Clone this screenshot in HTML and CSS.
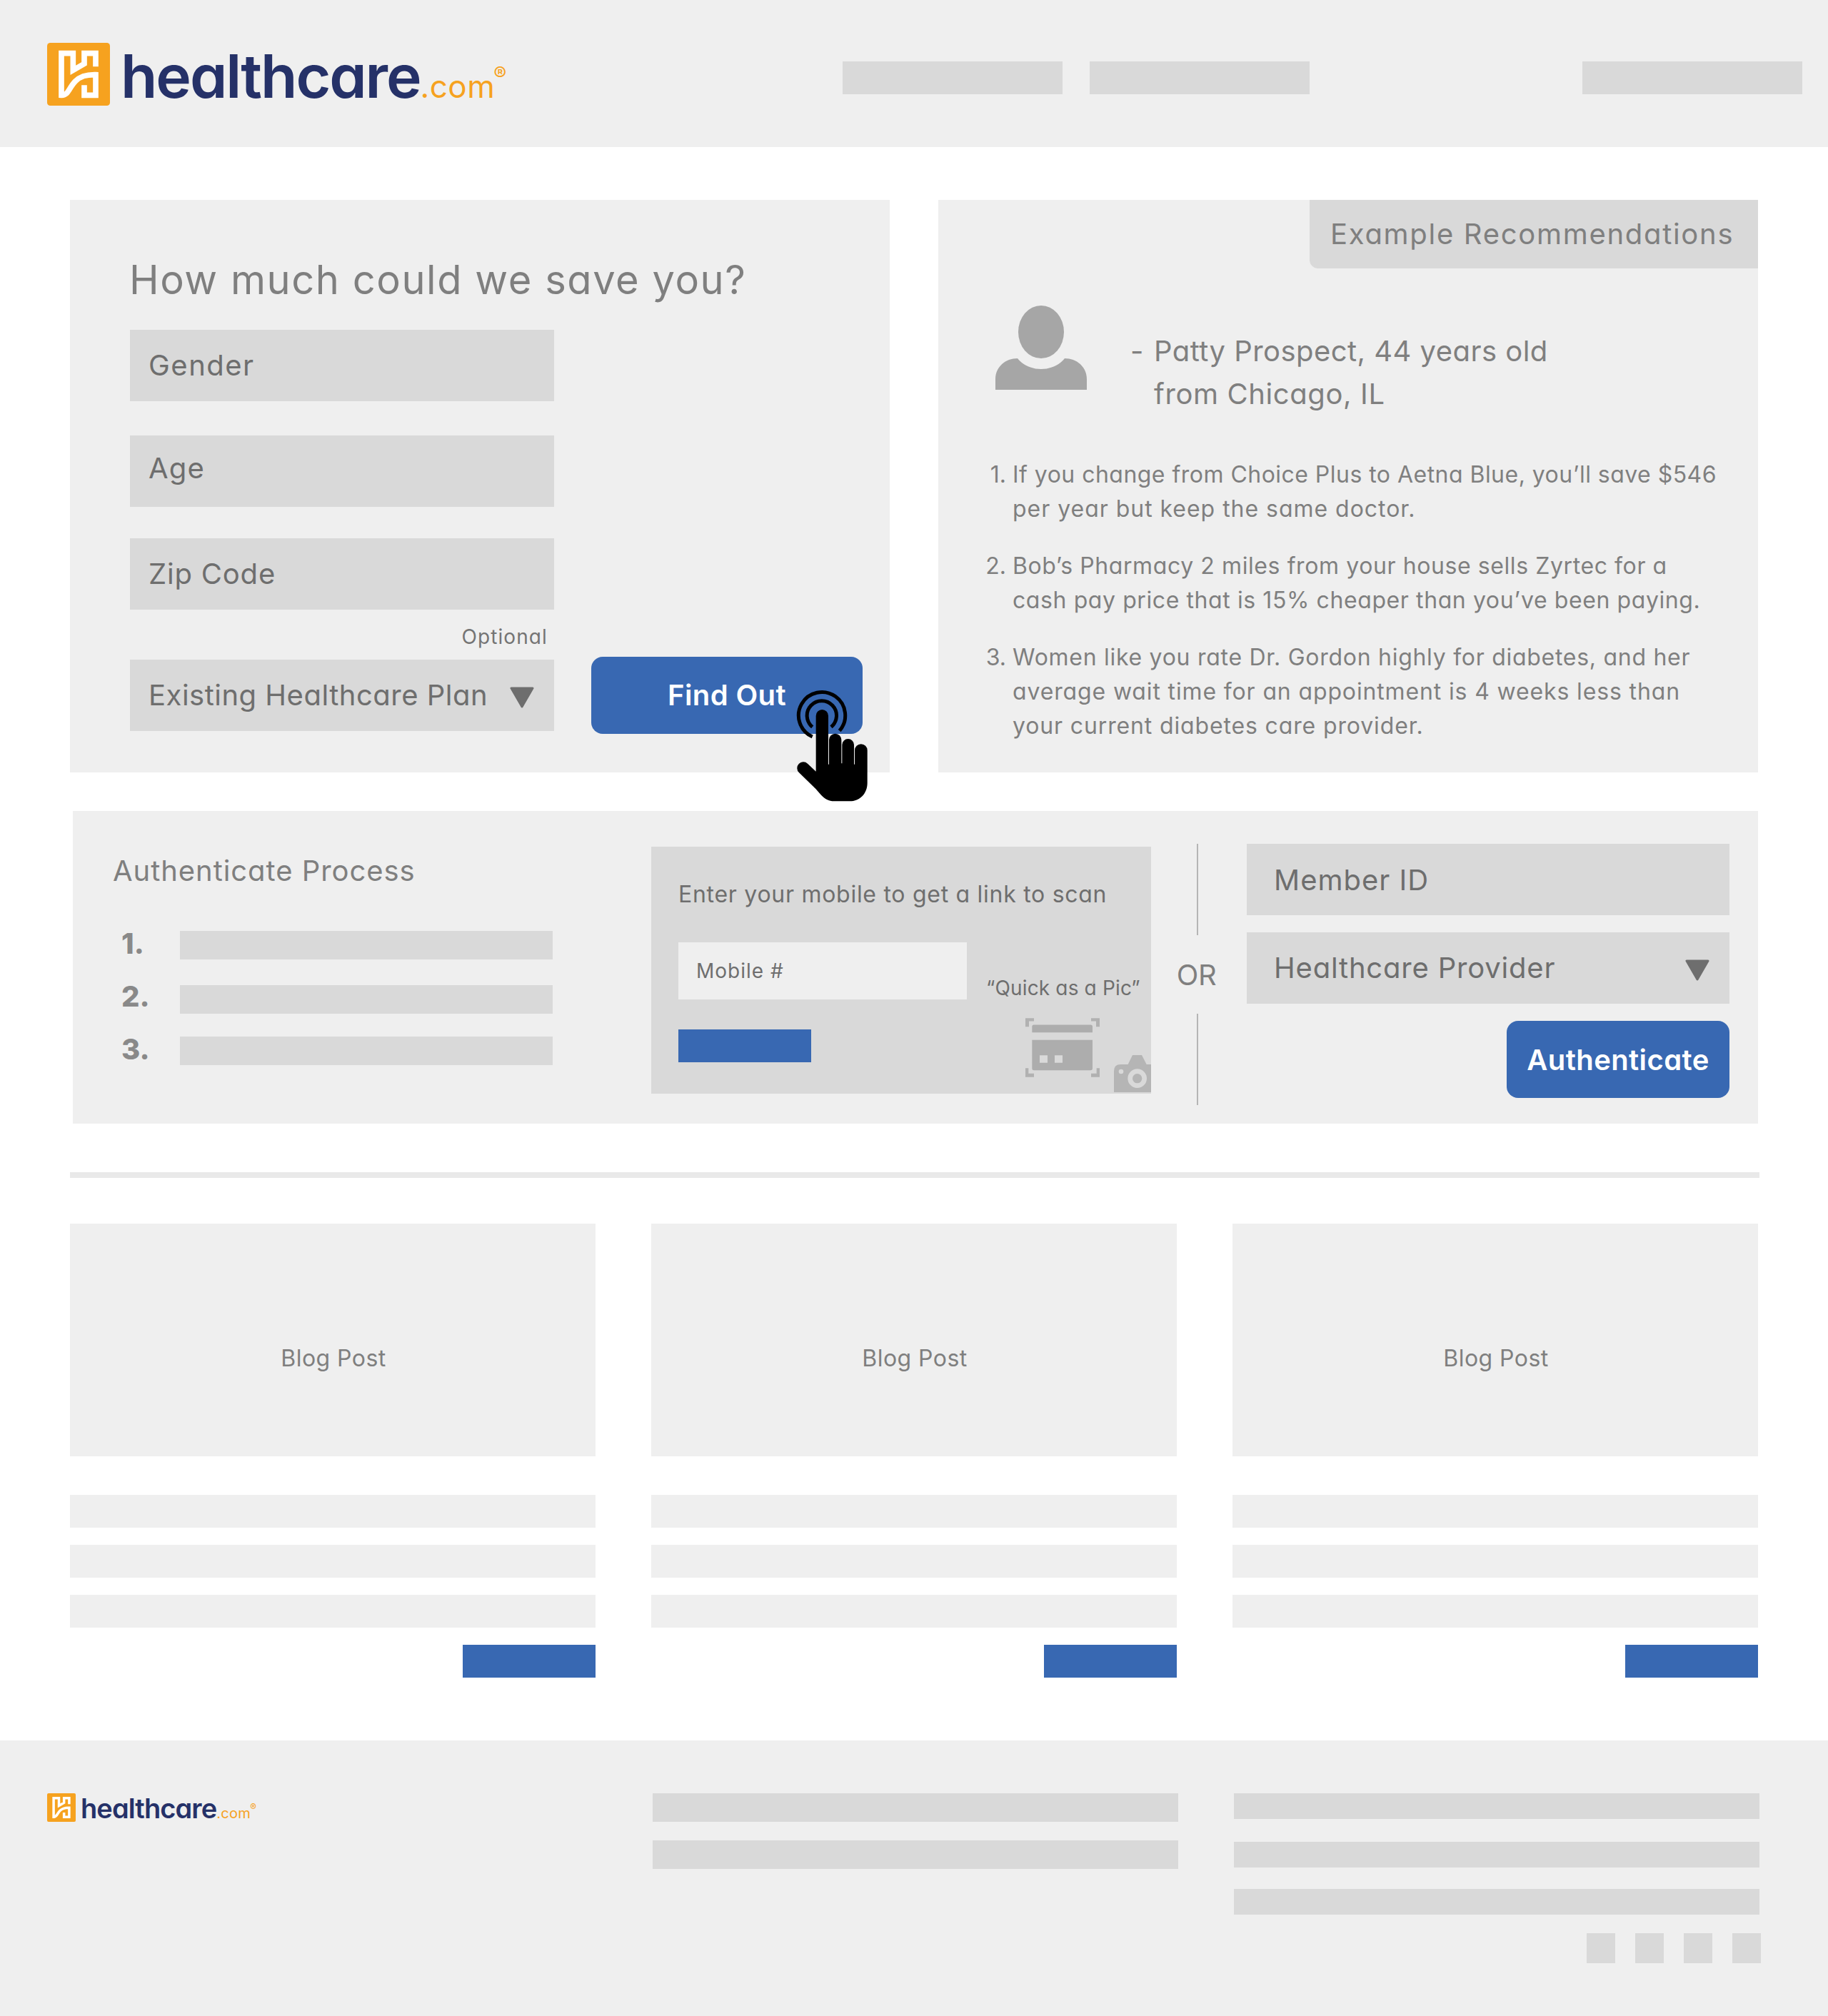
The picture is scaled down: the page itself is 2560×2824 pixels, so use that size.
FILE: index.html
```html
<!DOCTYPE html>
<html lang="en">
<head>
<meta charset="utf-8">
<title>healthcare.com</title>
<link rel="stylesheet" href="styles.css">
</head>
<body>
<svg class="defs" width="0" height="0" aria-hidden="true">
  <symbol id="mark" viewBox="0 0 264 264">
    <rect width="264" height="264" rx="13" fill="#f6a21f"/>
    <path d="M204 100V44H156V88L109 115V44H60V220C90 221 92 188 118 162C140 140 165 133 204 134V220H156V178" fill="none" stroke="#fff" stroke-width="23"/>
  </symbol>
  <symbol id="caret" viewBox="0 0 34 30">
    <path d="M2 2H32L17 28Z" fill="#6e6e6e" stroke="#6e6e6e" stroke-width="3" stroke-linejoin="round"/>
  </symbol>
</svg>

<header class="header">
  <div class="logo">
    <svg class="logo-mark"><use href="#mark"/></svg>
    <div class="logo-text">healthcare<span class="logo-tld">.com</span><span class="logo-reg">®</span></div>
  </div>
  <nav class="nav">
    <span class="nav-item"></span>
    <span class="nav-item"></span>
    <span class="nav-item nav-last"></span>
  </nav>
</header>

<main class="main">
  <div class="hero">
    <section class="panel form">
      <h1 class="form-title">How much could we save you?</h1>
      <div class="field gender">Gender</div>
      <div class="field age">Age</div>
      <div class="field zip">Zip Code</div>
      <div class="optional">Optional</div>
      <div class="form-row">
        <div class="field select plan"><span>Existing Healthcare Plan</span><svg class="caret"><use href="#caret"/></svg></div>
        <div class="button find">Find Out</div>
      </div>
      <svg class="pointer" viewBox="0 0 540 750">
        <g fill="none" stroke="#000" stroke-width="15">
          <path d="M143 396A98 98 0 1 1 257 371"/>
          <path d="M143 355A62 62 0 1 1 222 355"/>
        </g>
        <path d="M158 542V308A26 26 0 0 1 210 308V512H213V409A26 26 0 0 1 265 409V508H268V430A25 25 0 0 1 318 430V512H321V453A26.500 26.500 0 0 1 374 453V590C374 635 342 667 300 667H235C212 667 194 656 180 641L157 615L87 547A26 26 0 0 1 123 509Z"/>
      </svg>
    </section>

    <section class="panel recs">
      <div class="tab">Example Recommendations</div>
      <div class="profile">
        <svg class="avatar" viewBox="0 0 128 118">
          <ellipse cx="64" cy="37" rx="32" ry="37" fill="#a6a6a6"/>
          <path d="M0 118V103C0 86 14 74 31 74C38 83 50 89 64 89S90 83 97 74C114 74 128 86 128 103V118Z" fill="#a6a6a6"/>
        </svg>
        <span class="dash">-</span>
        <div class="who"><div class="who-name">Patty Prospect, 44 years old</div><div class="who-city">from Chicago, IL</div></div>
      </div>
      <div class="rec"><span class="num">1.</span><div><div class="t1">If you change from Choice Plus to Aetna Blue, you’ll save $546</div><div class="t2">per year but keep the same doctor.</div></div></div>
      <div class="rec"><span class="num">2.</span><div><div class="t3">Bob’s Pharmacy 2 miles from your house sells Zyrtec for a</div><div class="t3">cash pay price that is 15% cheaper than you’ve been paying.</div></div></div>
      <div class="rec"><span class="num">3.</span><div><div class="t4">Women like you rate Dr. Gordon highly for diabetes, and her</div><div class="t5">average wait time for an appointment is 4 weeks less than</div><div class="t5">your current diabetes care provider.</div></div></div>
    </section>
  </div>

  <section class="panel auth">
    <div class="process">
      <h2 class="process-title">Authenticate Process</h2>
      <div class="step"><b>1.</b><span></span></div>
      <div class="step second"><b>2.</b><span></span></div>
      <div class="step"><b>3.</b><span></span></div>
    </div>
    <div class="scan">
      <div class="scan-title">Enter your mobile to get a link to scan</div>
      <div class="scan-body">
        <div class="scan-left">
          <div class="mobile">Mobile #</div>
          <div class="pill"></div>
        </div>
        <div class="scan-right">
          <div class="quick">“Quick as a Pic”</div>
          <div class="scan-icons">
            <svg class="card-icon" viewBox="0 0 312 248">
              <path d="M0 36V0H36V13H15V36ZM276 0H312V36H297V13H276ZM0 210H13V233H36V248H0ZM299 210H312V248H276V233H299Z" fill="#b1b1b1"/>
              <path d="M28 60V36Q28 28 36 28H274Q282 28 282 36V60ZM28 92H282V211Q282 219 274 219H36Q28 219 28 211ZM60 156V188H93V156ZM123 156V188H156V156Z" fill="#adadad" fill-rule="evenodd"/>
            </svg>
            <svg class="camera-icon" viewBox="0 0 156 156">
              <path d="M0 156V67Q0 39 28 39H59L78 0H117L137 39H156V156Z" fill="#b5b5b5"/>
              <circle cx="30" cy="69" r="10" fill="#d9d9d9"/>
              <circle cx="98" cy="98" r="30" fill="none" stroke="#d9d9d9" stroke-width="20"/>
            </svg>
          </div>
        </div>
      </div>
    </div>
    <div class="or"><i></i><span>OR</span><i></i></div>
    <div class="member">
      <div class="field member-id">Member ID</div>
      <div class="field select provider"><span>Healthcare Provider</span><svg class="caret"><use href="#caret"/></svg></div>
      <div class="button authenticate">Authenticate</div>
    </div>
  </section>

  <div class="rule"></div>

  <div class="posts">
    <article class="post"><div class="thumb">Blog Post</div><span class="line"></span><span class="line"></span><span class="line"></span><span class="pill"></span></article>
    <article class="post"><div class="thumb">Blog Post</div><span class="line"></span><span class="line"></span><span class="line"></span><span class="pill"></span></article>
    <article class="post"><div class="thumb">Blog Post</div><span class="line"></span><span class="line"></span><span class="line"></span><span class="pill"></span></article>
  </div>
</main>

<footer class="footer">
  <div class="logo small">
    <svg class="logo-mark"><use href="#mark"/></svg>
    <div class="logo-text">healthcare<span class="logo-tld">.com</span><span class="logo-reg">®</span></div>
  </div>
  <div class="foot-mid"><span></span><span></span></div>
  <div class="foot-end">
    <span></span><span></span><span></span>
    <div class="social"><i></i><i></i><i></i><i></i></div>
  </div>
</footer>
</body>
</html>
```

FILE: styles.css
```css
* { box-sizing: border-box; }
body {
  margin: 0;
  width: 2560px;
  background: #fff;
  color: #7f7f7f;
  font-family: Inter, "Liberation Sans", sans-serif;
  font-feature-settings: "cv11";
  font-size: 40px;
  white-space: nowrap;
}
h1, h2 { margin: 0; font-weight: 400; }
svg { display: block; flex: none; }
.defs { position: absolute; }

/* Header */
.header {
  height: 206px;
  background: #efefef;
  display: flex;
  justify-content: space-between;
  align-items: flex-start;
  padding: 0 36px 0 66px;
}
.logo { display: flex; align-items: flex-start; padding-top: 57px; }
.logo-mark { width: 88px; height: 88px; margin: 3px 15px 0 0; }
.logo-text {
  height: 100px;
  line-height: 100px;
  font-size: 84px;
  font-weight: 560;
  letter-spacing: -2.1px;
  color: #253168;
}
.logo-tld, .logo-reg { color: #f6a21f; line-height: 0; font-weight: 400; }
.logo-tld { font-size: 44px; letter-spacing: .5px; }
.logo-reg { font-size: 27px; letter-spacing: 0; vertical-align: 24px; margin-left: -2px; }
.nav { display: flex; width: 1344px; gap: 38px; padding-top: 86px; }
.nav-item { width: 308px; height: 46px; background: #d9d9d9; }
.nav-last { margin-left: auto; }

/* Shared pieces */
.main { padding: 74px 96px 0 98px; }
.panel { background: #efefef; }
.field {
  height: 100px;
  line-height: 100px;
  padding-left: 26px;
  background: #d9d9d9;
  color: #6e6e6e;
}
.select { display: flex; justify-content: space-between; padding-right: 28px; }
.caret { width: 34px; height: 30px; margin-top: 38px; }
.button {
  height: 108px;
  line-height: 108px;
  border-radius: 16px;
  background: #3868b2;
  color: #fff;
  font-weight: 600;
  text-align: center;
  letter-spacing: .4px;
}
.pill { display: block; width: 186px; height: 46px; background: #3868b2; }

/* Savings form */
.hero { display: flex; gap: 68px; }
.form { position: relative; width: 1148px; height: 802px; padding: 72px 38px 0 84px; }
.form-title { margin: 0 0 30px -1px; font-size: 56px; line-height: 80px; letter-spacing: 1.55px; }
.form .field { width: 594px; }
.form .gender { line-height: 99px; letter-spacing: 1.5px; }
.form .age { margin: 48px 0 44px; line-height: 92px; letter-spacing: 1.2px; }
.zip { letter-spacing: .8px; }
.plan { letter-spacing: .5px; }
.optional {
  width: 585px;
  height: 70px;
  line-height: 76px;
  font-size: 28px;
  letter-spacing: 1.1px;
  text-align: right;
  color: #747474;
}
.form-row { display: flex; justify-content: space-between; }
.find { width: 380px; margin-top: -4px; }
.pointer { position: absolute; left: 992px; top: 620px; width: 180px; height: 250px; }

/* Recommendations */
.recs { width: 1148px; height: 802px; }
.tab {
  width: 628px;
  height: 96px;
  margin-left: auto;
  padding-left: 29px;
  line-height: 96px;
  letter-spacing: 1.7px;
  background: #d9d9d9;
  border-bottom-left-radius: 12px;
}
.profile { display: flex; padding: 52px 0 60px 80px; line-height: 60px; }
.avatar { width: 128px; height: 118px; margin-right: 61px; }
.dash { width: 33px; margin-top: 34px; }
.who { margin-top: 34px; height: 119px; }
.who-name { letter-spacing: .45px; }
.who-city { letter-spacing: .6px; }
.rec { display: flex; gap: 9px; margin-bottom: 32px; padding-left: 45px; font-size: 32px; line-height: 48px; }
.num { width: 50px; text-align: right; }
.t1 { letter-spacing: .47px; }
.t2 { letter-spacing: .97px; }
.t3 { letter-spacing: .59px; }
.t4 { letter-spacing: .72px; }
.t5 { letter-spacing: .86px; }

/* Authenticate */
.auth {
  display: grid;
  grid-template-columns: 810px 700px 130px 676px;
  width: 2360px;
  height: 438px;
  margin: 54px 0 0 4px;
  align-items: start;
}
.process { padding: 54px 0 0 56px; }
.process-title { margin-bottom: 54px; font-size: 40px; line-height: 60px; letter-spacing: .95px; }
.step { display: flex; height: 40px; margin-bottom: 36px; padding-left: 12px; line-height: 35px; color: #898989; }
.step b { width: 82px; font-weight: 800; }
.step span { width: 522px; background: #d9d9d9; }
.second { margin-bottom: 32px; line-height: 31px; }
.scan { height: 346px; margin-top: 50px; padding: 43px 0 0 38px; background: #d9d9d9; color: #6e6e6e; }
.scan-title { margin-bottom: 43px; font-size: 32px; line-height: 48px; letter-spacing: .72px; }
.scan-body { display: flex; font-size: 28px; }
.scan-left { width: 404px; }
.mobile { height: 80px; line-height: 80px; margin-bottom: 42px; padding-left: 25px; letter-spacing: 1px; background: #efefef; }
.scan-right { padding-top: 44px; }
.quick { padding-left: 27px; line-height: 40px; letter-spacing: .15px; }
.scan-icons { display: flex; gap: 20px; margin-top: 22px; padding-left: 82px; }
.card-icon { width: 104px; height: 83px; }
.camera-icon { width: 52px; height: 52px; margin-top: 52px; }
.or { display: flex; flex-direction: column; align-items: center; margin-top: 46px; }
.or i { width: 2px; height: 128px; background: #b5b5b5; }
.or span { height: 110px; padding-right: 3px; line-height: 112px; letter-spacing: -.5px; }
.member { display: flex; flex-direction: column; gap: 24px; margin: 46px 0 0 4px; width: 676px; }
.member .field { padding-left: 38px; }
.member .member-id { line-height: 102px; letter-spacing: 1px; }
.provider { letter-spacing: .8px; }
.authenticate { width: 312px; align-self: flex-end; line-height: 109px; }

/* Blog */
.rule { height: 8px; margin: 68px 0 64px; background: #e9e9e9; }
.posts { display: flex; gap: 78px; }
.post { display: flex; flex-direction: column; gap: 24px; width: 736px; }
.thumb {
  height: 326px;
  margin-bottom: 30px;
  padding: 165px 0 0 2px;
  background: #efefef;
  font-size: 32px;
  line-height: 48px;
  letter-spacing: .45px;
  text-align: center;
}
.line { height: 46px; background: #efefef; }
.post .pill { align-self: flex-end; }

/* Footer */
.footer {
  display: grid;
  grid-template-columns: 848px 814px 738px;
  height: 386px;
  margin-top: 88px;
  padding: 74px 0 0 66px;
  background: #efefef;
}
.small { padding: 0; }
.small .logo-mark { width: 40px; height: 40px; margin: 0 7px 0 0; }
.small .logo-text { height: 42px; line-height: 42px; font-size: 38px; letter-spacing: -.9px; }
.small .logo-tld { font-size: 20px; letter-spacing: .3px; }
.small .logo-reg { font-size: 13px; vertical-align: 11px; margin-left: -1px; }
.foot-mid span { display: block; width: 736px; height: 40px; margin-bottom: 26px; background: #d9d9d9; }
.foot-end span { display: block; width: 736px; height: 36px; margin-bottom: 32px; background: #d9d9d9; }
.foot-end span:nth-child(2) { margin-bottom: 30px; }
.foot-end span:nth-child(3) { margin-bottom: 26px; }
.social { display: flex; justify-content: flex-end; gap: 28px; }
.social i { width: 40px; height: 42px; background: #d9d9d9; }
```
